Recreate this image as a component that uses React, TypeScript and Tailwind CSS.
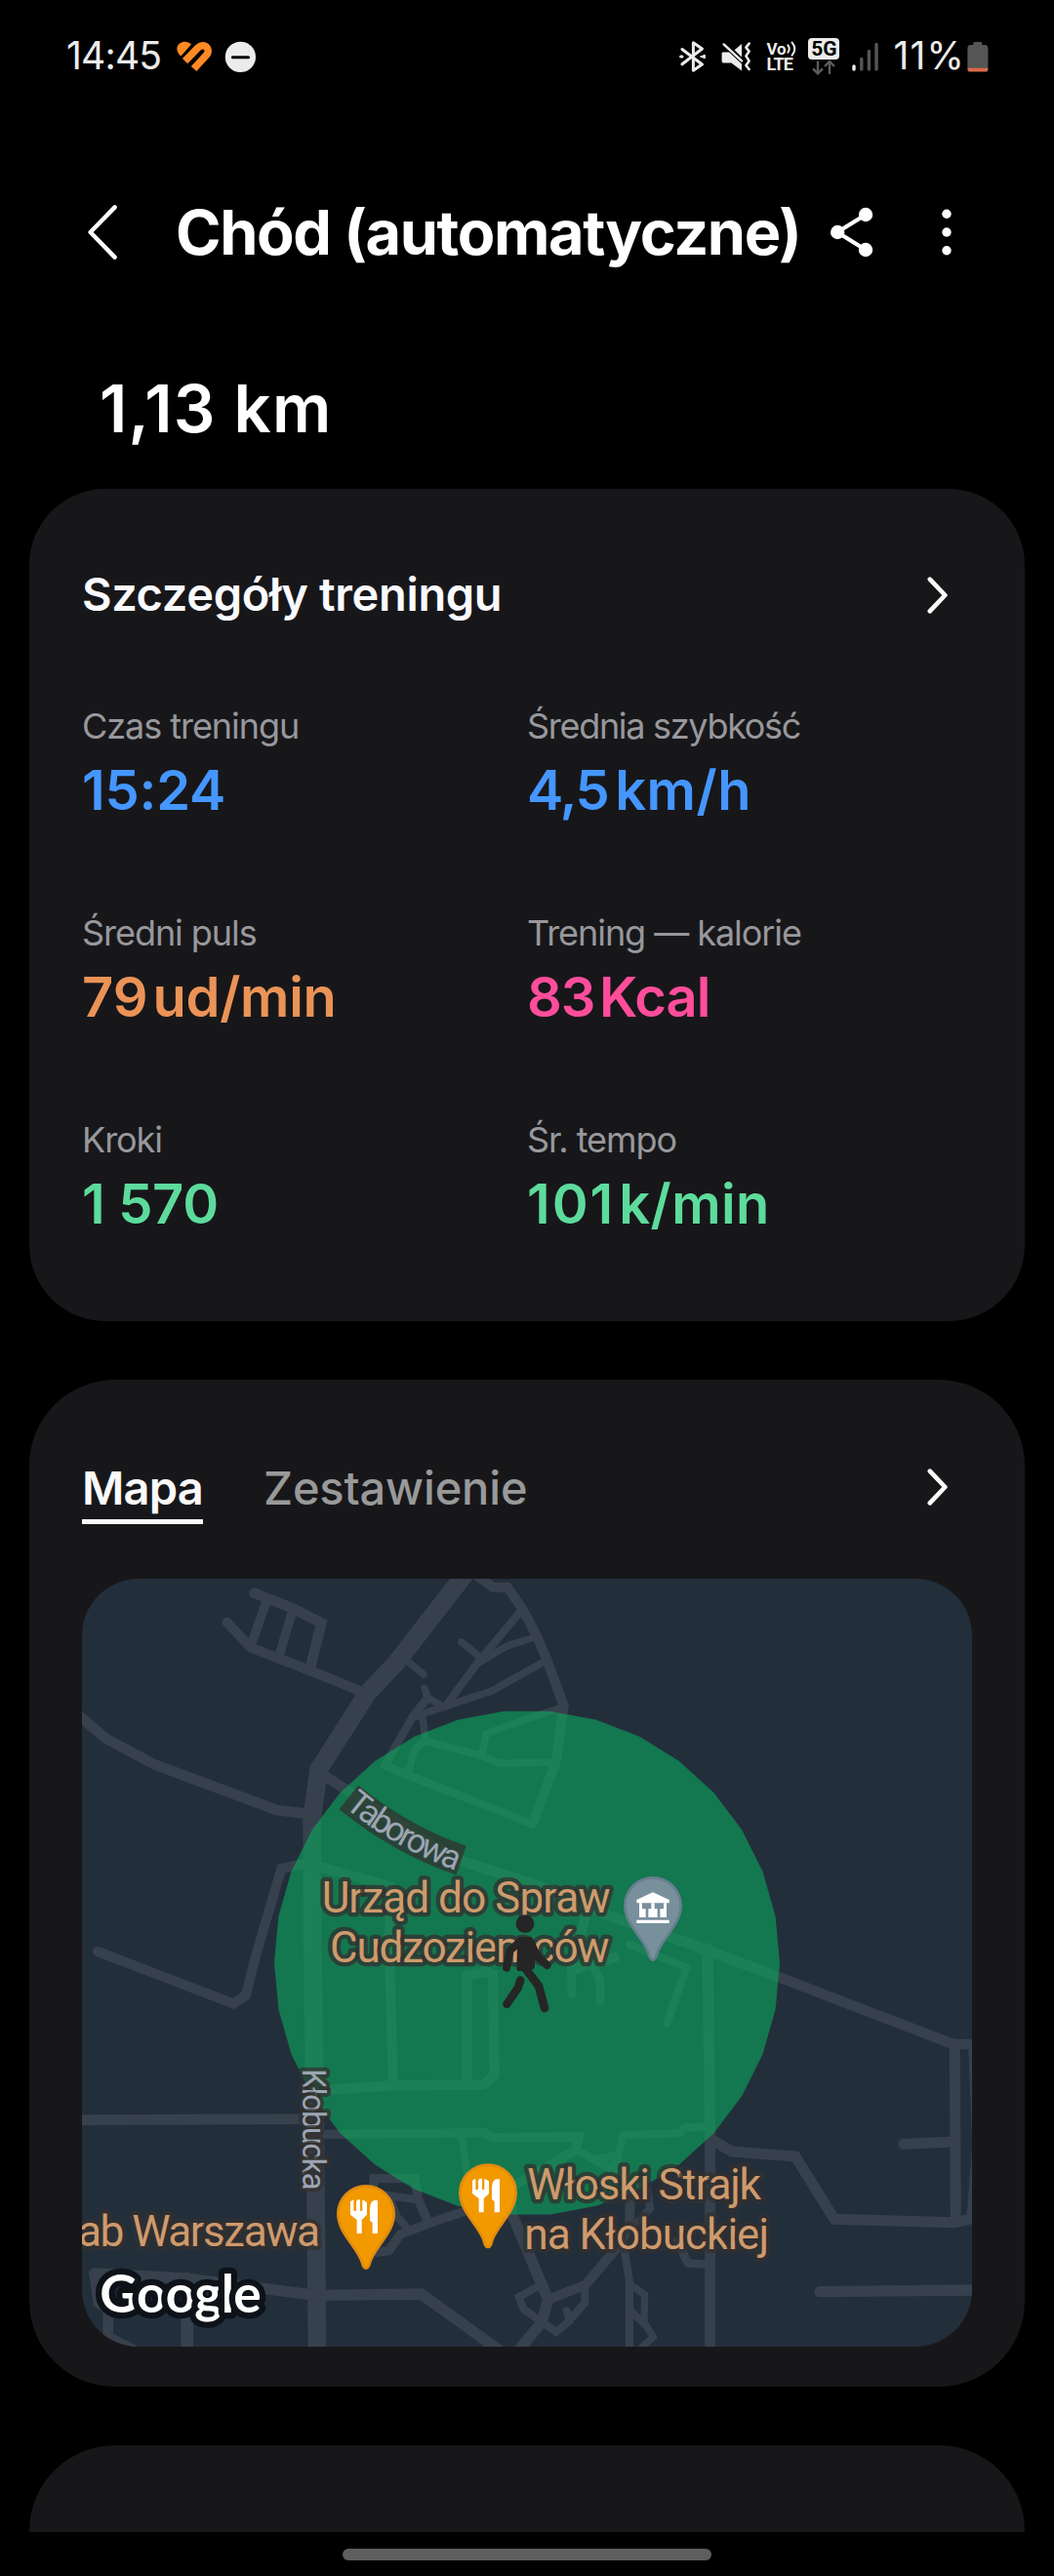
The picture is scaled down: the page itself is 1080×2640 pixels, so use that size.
type Stat = {
    label: string;
    labelClass?: string;
    value: string;
    unit?: string;
    color: string;
    valueClass: string;
    unitClass?: string;
};

const stats: Stat[] = [
    { label: 'Czas treningu', value: '15:24', color: 'text-[#4596ff]', valueClass: 'tracking-[-0.2px]' },
    { label: 'Średnia szybkość', labelClass: 'tracking-[-1.3px]', value: '4,5', unit: 'km/h', color: 'text-[#4596ff]', valueClass: 'tracking-[-1.6px]', unitClass: 'ml-[7px] tracking-[0.5px]' },
    { label: 'Średni puls', value: '79', unit: 'ud/min', color: 'text-[#eb9356]', valueClass: '', unitClass: 'ml-[5px] tracking-[-0.3px]' },
    { label: 'Trening — kalorie', value: '83', unit: 'Kcal', color: 'text-[#ff4d9b]', valueClass: 'tracking-[-1.2px]', unitClass: 'ml-[5px] tracking-[-0.9px]' },
    { label: 'Kroki', value: '1 570', color: 'text-[#5ddb9c]', valueClass: 'tracking-[-0.3px]' },
    { label: 'Śr. tempo', value: '101', unit: 'k/min', color: 'text-[#5ddb9c]', valueClass: 'tracking-[2px]', unitClass: 'ml-[4px] tracking-[0.4px]' },
];

// [path, stroke width]
const roads: [string, number][] = [
    ['M1215 45 L1010 310 L920 405 L770 640 L749 790 L751 1200 L757 1600 L765 2430', 56],
    ['M30 472 L115 545 L265 625 L640 765 L730 776', 32],
    ['M572 98 L690 145 L778 190 L742 335', 32],
    ['M488 188 L560 265 L735 333 L900 400', 30],
    ['M608 125 L565 250', 28],
    ['M687 160 L648 290', 28],
    ['M1040 305 L1092 348', 22],
    ['M1250 40 L1305 80 L1350 80 L1395 145 L1440 230 L1470 300 L1523 445 L1498 620 L1427 808', 30],
    ['M1427 808 L1050 660 L973 628 L1060 475 L1105 420', 25],
    ['M1390 155 L1260 310 L1160 445', 24],
    ['M1208 248 L1262 292', 22],
    ['M1262 312 L1350 260 L1440 232', 22],
    ['M1470 305 L1300 400 L1160 445 L1060 480', 23],
    ['M1095 390 L1105 420 L1155 448', 22],
    ['M1088 475 L1098 550 L1064 580 L1045 650', 22],
    ['M1098 552 L1270 598 L1325 622 L1498 618', 23],
    ['M1270 598 L1285 530 L1410 485 L1515 450', 22],
    ['M780 655 L1020 810 L1200 920 L1440 995 L1650 1085 L1900 1172 L2200 1285 L2720 1485 L2790 1485', 32],
    ['M725 930 L655 945 L580 1200 L545 1335 L507 1360 L90 1200', 30],
    ['M755 935 L990 1000 L987 1200 L998 1600', 30],
    ['M790 1625 L1000 1612 L1275 1610 L1310 1580 L1305 1270 L1285 1262 L1225 1275 L1225 1610', 31],
    ['M30 1718 L757 1715', 32],
    ['M770 1762 L1280 1757 L1305 1772 L1570 1770 L1560 1810', 28],
    ['M1208 1760 L1225 1880', 22],
    ['M1560 1810 L1380 1915', 28],
    ['M1560 1810 L1700 1885', 24],
    ['M1620 1840 L1690 1825', 24],
    ['M1970 1738 L1895 1742 L1880 1758 L1705 1765 L1690 1830 L1670 1880', 24],
    ['M1590 1090 L1547 1250', 30],
    ['M1570 1250 L1680 1218', 30],
    ['M1547 1330 L1547 1260 L1610 1240 L1635 1290 L1635 1350', 26],
    ['M1725 1178 L1900 1250 L1840 1420', 24],
    ['M1965 1190 L1973 1770 L1973 2430', 33],
    ['M1973 1775 L2040 1815 L2235 1830 L2355 2023 L2725 2033 L2790 2018', 33],
    ['M2725 1485 L2728 2030', 33],
    ['M2568 1792 L2725 1785', 33],
    ['M2776 1500 L2788 1800 L2770 2015', 18],
    ['M2310 2246 L2790 2241', 34],
    ['M1350 1975 L1475 2270 L1455 2340 L1385 2425', 34],
    ['M1475 2270 L1590 2225 L1700 2095 L1725 2040 L1728 1950', 30],
    ['M1588 2235 L1588 2280 L1535 2340 L1500 2370 L1400 2300 L1385 2262 L1440 2232', 24],
    ['M1532 2305 L1542 2335', 24],
    ['M1705 2090 L1725 2215 L1725 2430', 24],
    ['M1730 2225 L1772 2255 L1770 2340 L1798 2385 L1755 2425', 22],
    ['M1730 2305 L1770 2345', 22],
    ['M1780 1930 L1788 1990 L1735 2050', 24],
    ['M1870 2090 L1905 2158 L1973 2163', 26],
    ['M1365 1985 L1260 1985 L1110 2035 L1020 2070 L985 2120 L950 2125', 28],
    ['M935 1955 L940 1898 L1065 1898 L1075 1960 L1105 2030', 28],
    ['M1065 1962 L985 1950 L1010 2015 L1050 2060', 24],
    ['M80 2190 L360 2205 L760 2257 L1085 2253 L1330 2430', 34],
    ['M365 2205 L365 2430', 38],
    ['M80 2190 L92 2280 L122 2300 L122 2385 L200 2425', 32],
];

// the accuracy area is drawn as a coarse polygon, not a true circle
const SIDES = 34;
const areaPoints = Array.from({ length: SIDES }, (_, i) => {
    const a = (i / SIDES) * Math.PI * 2;
    return `${(1410 + 777 * Math.cos(a)).toFixed(1)},${(1235 + 777 * Math.sin(a)).toFixed(1)}`;
}).join(' ');

function Chevron({ className = '' }: { className?: string }) {
    return (
        <svg viewBox="0 0 22 38" className={`h-[38px] w-[22px] ${className}`} fill="none" stroke="#fafafa" strokeWidth="4.6" strokeLinecap="round" strokeLinejoin="round">
            <path d="M2.8 2.6 L18.4 19 L2.8 35.4" />
        </svg>
    );
}

function StatusBar() {
    return (
        <div className="flex h-[116px] items-center pl-[68px] pr-[67px] text-[39px] text-[#ececec]">
            <span className="-mt-[2px] w-[113px] tracking-[-0.8px]">14:45</span>
            <svg viewBox="0 0 37 32" className="h-[32px] w-[37px]">
                <path d="M4.4 15.6 C-1 11 -0.6 5.4 3.2 2.6 C7 -0.2 11.6 0.4 15 3.6 Z" fill="#ff8a24" />
                <path d="M8.6 20.6 L21.6 7.2 C28 1 36 8 30.4 14.6 L17.6 28.4" fill="none" stroke="#ff8a24" strokeWidth="7.4" />
                <path d="M11.5 24.6 L26 10.2" stroke="#000" strokeWidth="1.4" />
            </svg>
            <svg viewBox="0 0 32 32" className="ml-[12px] h-[32px] w-[32px]">
                <circle cx="16.4" cy="16.4" r="15.6" fill="#ececec" />
                <path d="M8.4 16.8 H24.6" stroke="#000" strokeWidth="3" strokeLinecap="round" />
            </svg>

            <div className="ml-auto flex items-center">
                <svg viewBox="0 0 28 32" className="mr-[15px] h-[32px] w-[28px]" fill="none" stroke="#ececec" strokeWidth="3" strokeLinecap="round" strokeLinejoin="round">
                    <path d="M3 8.5 L23.4 24 L14.4 30.2 V1.8 L23.4 8 L3 23.8" />
                    <path d="M1.6 16 H3" />
                    <path d="M26 14.4 L21.4 16 L26 17.6 Z" fill="#ececec" strokeWidth="1" />
                </svg>
                <svg viewBox="0 0 31 32" className="mr-[15px] h-[32px] w-[31px]" fill="#ececec">
                    <path d="M1.4 11.4 H8.2 L21 23.6 V30.4 L10.4 22.6 H3 Q0.6 22.6 0.6 20 V12.6 Z" />
                    <path d="M21 3 V16.4 L13.6 9.2 Z" />
                    <path d="M2.6 3.4 L21 20.4" stroke="#ececec" strokeWidth="2.4" strokeLinecap="round" />
                    <path d="M28.6 2.6 L25.4 6.6 L28.6 10.6 L25.4 15.4 L28.6 20.4 L25.4 25 L28.6 29" fill="none" stroke="#ececec" strokeWidth="2.6" strokeLinecap="round" strokeLinejoin="round" />
                </svg>
                <div className="mr-[11px] w-[32px] font-['Roboto'] font-bold leading-none">
                    <div className="flex items-center text-[17px] leading-[16px]">
                        <span>Vo</span>
                        <svg viewBox="0 0 11 16" className="h-[16px] w-[11px]" fill="none" stroke="#ececec" strokeWidth="2" strokeLinecap="round">
                            <path d="M1.4 4.4 Q4 8 1.4 11.8 M5.6 1.6 Q11 8 5.6 14.6" />
                        </svg>
                    </div>
                    <div className="text-[18px] leading-[16px] tracking-[-0.7px]">LTE</div>
                </div>
                <div className="mr-[13px] flex w-[32px] flex-col items-center">
                    <div className="h-[22px] w-[32px] rounded-[4px] bg-[#ececec] text-center font-['Roboto'] text-[21px] font-bold leading-[22px] text-black">5G</div>
                    <svg viewBox="0 0 24 16" className="h-[16px] w-[24px]" fill="none" stroke="#5c5c5c" strokeWidth="2.4">
                        <path d="M6 1.5 V14 M1 9.4 L6 14.4 L11 9.4 M18 15 V2.5 M13 7 L18 2 L23 7" />
                    </svg>
                </div>
                <svg viewBox="0 0 28 30" className="mr-[14px] h-[30px] w-[28px]" strokeWidth="3.4" strokeLinecap="round">
                    <path d="M2 25 V28" stroke="#ececec" />
                    <path d="M9.8 17.4 V28 M17.4 9.4 V28 M25 2.4 V28" stroke="#555" />
                </svg>
                <span className="-mt-[2px] mr-[2px] tracking-[1.2px]">11%</span>
                <svg viewBox="0 0 22 32" className="h-[32px] w-[22px]">
                    <path d="M6.4 2 Q6.4 1 7.6 1 H14 Q15.2 1 15.2 2 V4 H18 Q21.4 4.4 21.4 7.6 V28 H0.4 V7.6 Q0.4 4.4 3.6 4 H6.4 Z" fill="#555" />
                    <path d="M0.4 27.8 H21.4 V29 Q21.4 31.6 18.6 31.6 H3.2 Q0.4 31.6 0.4 29 Z" fill="#d9694a" />
                </svg>
            </div>
        </div>
    );
}

function Header() {
    return (
        <header className="mt-[36px] flex h-[172px] items-center pl-[88px] pr-[104px]">
            <svg viewBox="0 0 34 58" className="h-[58px] w-[34px]" fill="none" stroke="#fff" strokeWidth="4.4" strokeLinecap="round" strokeLinejoin="round">
                <path d="M29.6 3.4 L4.6 29 L29.6 54.6" />
            </svg>
            <h1 className="ml-[58px] w-[671px] whitespace-nowrap text-[63px] font-bold leading-none tracking-[-1.38px]">Chód (automatyczne)</h1>
            <svg viewBox="0 0 44 52" className="h-[52px] w-[44px] shrink-0" fill="#fff">
                <path d="M36 8 L7 26 L36 44" fill="none" stroke="#fff" strokeWidth="4.2" />
                <circle cx="36" cy="8" r="7.2" />
                <circle cx="7.2" cy="26" r="7.2" />
                <circle cx="36" cy="44" r="7.2" />
            </svg>
            <svg viewBox="0 0 12 52" className="ml-auto h-[52px] w-[12px]" fill="#fff">
                <circle cx="6" cy="7.2" r="4.7" />
                <circle cx="6" cy="26" r="4.7" />
                <circle cx="6" cy="44.8" r="4.7" />
            </svg>
        </header>
    );
}

function Details() {
    return (
        <section className="h-[853px] rounded-[78px] bg-[#17171a] px-[54px] pt-[60px]">
            <div className="flex h-[97px] items-center justify-between pr-[24px]">
                <h2 className="text-[47px] font-semibold tracking-[-0.35px] text-[#fafaff]">Szczegóły treningu</h2>
                <Chevron />
            </div>
            <div className="mt-[62px] grid grid-cols-2 gap-y-[87px]">
                {stats.map((s) => (
                    <div key={s.label} className="h-[125px]">
                        <div className={`text-[36px] leading-[48px] text-[#98989c] ${s.labelClass ?? 'tracking-[-1.05px]'}`}>{s.label}</div>
                        <div className={`mt-[7px] flex text-[56px] font-semibold leading-[70px] ${s.color}`}>
                            <span className={s.valueClass}>{s.value}</span>
                            {s.unit && <span className={s.unitClass}>{s.unit}</span>}
                        </div>
                    </div>
                ))}
            </div>
        </section>
    );
}

function Pin({ x, y, fill, edge, children }: { x: number; y: number; fill: string; edge: string; children: React.ReactNode }) {
    return (
        <g transform={`translate(${x} ${y})`}>
            <path
                d="M-86 0 A86 86 0 1 1 86 0 C86 60 24 104 12 150 Q8 167 0 167 Q-8 167 -12 150 C-24 104 -86 60 -86 0 Z"
                fill={fill}
                stroke={edge}
                strokeWidth="8"
            />
            {children}
        </g>
    );
}

function ForkKnife() {
    return (
        <g fill="#fff">
            <path d="M-48 -38 L-38 -44 V-10 H-30 V-38 L-26 -44 H-18 V-10 H-11 V-44 L3 -36 V2 L-13 18 V60 H-28 V18 L-48 2 Z" />
            <path d="M36 -42 V60 H20 V26 L12 20 V-18 Q14 -40 26 -42 Z" />
        </g>
    );
}

function MapView() {
    return (
        <div className="mt-[56px] h-[787px] w-[912px] overflow-hidden rounded-[58px] bg-[#232e3b]">
            <svg viewBox="42 54 2736 2361" className="h-[787px] w-[912px]" fontFamily="Roboto, sans-serif">
                <g fill="none" stroke="#37414d" strokeLinecap="round">
                    {roads.map(([d, w]) => (
                        <path key={d} d={d} strokeWidth={w} />
                    ))}
                </g>
                <polygon points={areaPoints} fill="rgb(8,180,97)" fillOpacity="0.55" />

                {/* Street names */}
                <path id="taborowa" d="M848 754 Q1010 892 1240 968" fill="none" />
                <path d="M862 726 Q1025 858 1208 920" fill="none" stroke="#32302f" strokeOpacity="0.75" strokeWidth="94" />
                <g fill="#9ca5b3" fontSize="104">
                    <text>
                        <textPath href="#taborowa" textLength="398">Taborowa</textPath>
                    </text>
                    <text
                        transform="translate(719 1560) rotate(90)"
                        textLength="374"
                        fontSize="100"
                        stroke="#32302f"
                        strokeOpacity="0.75"
                        strokeWidth="24"
                        strokeLinejoin="round"
                        paintOrder="stroke"
                    >
                        Kłobucka
                    </text>
                </g>

                {/* Places */}
                <g fill="#cf9a6c" stroke="#32302f" strokeOpacity="0.75" strokeWidth="26" strokeLinejoin="round" paintOrder="stroke" fontSize="133">
                    <text x="779" y="1080" textLength="888">Urząd do Spraw</text>
                    <text x="804" y="1232" textLength="860">Cudzoziemców</text>
                    <text x="1410" y="1963" textLength="720">Włoski Strajk</text>
                    <text x="1402" y="2114" textLength="752">na Kłobuckiej</text>
                    <text x="30" y="2105" textLength="744">ab Warszawa</text>
                </g>

                <Pin x={1797} y={1059} fill="#78909c" edge="#667f8e">
                    <g fill="#fff">
                        <path d="M-50 -18 L0 -41 L50 -18 V-8 H-50 Z" />
                        <path d="M-42 -8 H-33 V10 H-22 V36 H-42 Z M42 -8 H33 V10 H22 V36 H42 Z M-5 -8 H5 V10 H14 V36 H-14 V10 H-5 Z" />
                        <path d="M-50 44 H50 V54 H-50 Z" />
                    </g>
                </Pin>
                <Pin x={915} y={2007} fill="#f29900" edge="#e28b0c">
                    <ForkKnife />
                </Pin>
                <Pin x={1290} y={1942} fill="#f29900" edge="#e28b0c">
                    <ForkKnife />
                </Pin>

                {/* Walking marker */}
                <g fill="#252525" stroke="#252525" strokeLinecap="round" strokeLinejoin="round">
                    <circle cx="1404" cy="1115" r="28" stroke="none" />
                    <path d="M1392 1165 L1418 1165 L1424 1245 L1388 1250 Z" strokeWidth="20" />
                    <path d="M1388 1170 L1358 1196 L1347 1250" strokeWidth="24" fill="none" />
                    <path d="M1420 1172 L1442 1214 L1472 1242" strokeWidth="24" fill="none" />
                    <path d="M1402 1248 L1446 1306 L1464 1374" strokeWidth="26" fill="none" />
                    <path d="M1390 1288 L1382 1312 L1348 1362" strokeWidth="25" fill="none" />
                </g>

                <text x="97" y="2309" fontFamily="Lato, sans-serif" fontSize="160" fontWeight="700" textLength="496" fill="#fff" stroke="#0d1219" strokeWidth="38" strokeLinejoin="round" paintOrder="stroke">
                    Google
                </text>
            </svg>
        </div>
    );
}

function MapCard() {
    return (
        <section className="mt-[60px] h-[1032px] rounded-[88px] bg-[#17171a] px-[54px] pt-[79px]">
            <div className="flex h-[69px] items-start text-[47px]">
                <button className="h-[69px] border-b-[5px] border-[#fafafa] font-semibold leading-[64px] tracking-[-0.8px] text-[#fafafa]">Mapa</button>
                <button className="ml-[62px] font-medium leading-[64px] tracking-[-0.15px] text-[#999]">Zestawienie</button>
                <Chevron className="ml-auto mr-[24px] mt-[12px]" />
            </div>
            <MapView />
        </section>
    );
}

export default function App() {
    return (
        <div className="h-[2640px] w-[1080px] overflow-hidden bg-black font-['Inter',sans-serif] text-white">
            <StatusBar />
            <Header />
            <div className="h-[177px] pl-[102px] pt-[55px] text-[67px] font-semibold leading-[80px] tracking-[1.2px]">1,13 km</div>
            <main className="px-[30px]">
                <Details />
                <MapCard />
                <section className="mt-[60px] h-[89px] rounded-t-[88px] bg-[#17171a]" />
            </main>
            <div className="mx-auto mt-[17px] h-[12px] w-[378px] rounded-full bg-[#5e5e5e]" />
        </div>
    );
}
